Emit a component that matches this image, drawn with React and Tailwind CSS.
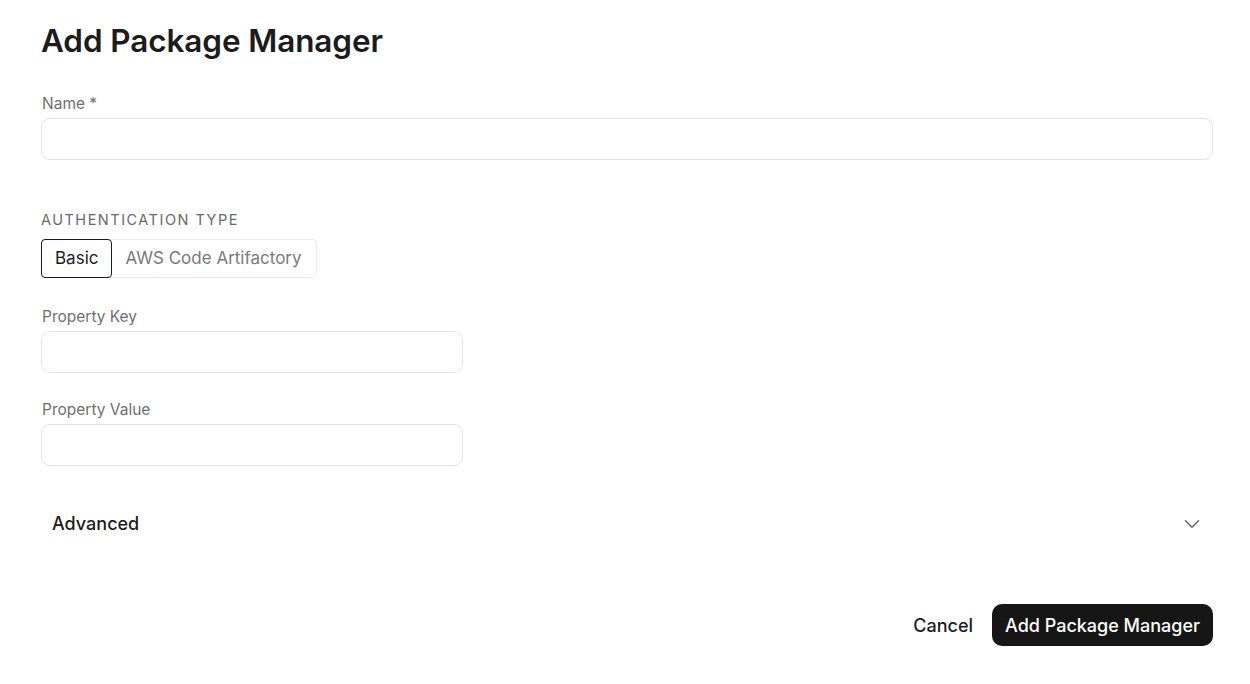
import React, { useState } from 'react'
import { ChevronDown } from 'lucide-react'

const Field = ({ label, className = '' }) => (
  <div className={className}>
    <label className="block pl-px text-[15.5px] leading-5 text-[#6f6f6f]">{label}</label>
    <input
      type="text"
      className="mt-[4px] block h-[42px] w-full rounded-[9px] border border-[#e4e4e4] bg-white px-3 text-[15px] outline-none"
    />
  </div>
)

const App = () => {
  const [auth, setAuth] = useState('basic')

  return (
    <div
      className="min-h-[684px] bg-white pl-[41px] pr-[37px] pt-[22px] text-[#1a1a1a]"
      style={{ fontFamily: 'Inter, "Noto Sans", sans-serif' }}
    >
      <h1 className="text-[31.5px] font-semibold leading-[38px] tracking-[-0.1px] text-[#1c1c1c]">
        Add Package Manager
      </h1>

      <Field label="Name *" className="mt-[34px]" />

      {/* Authentication type */}
      <div className="mt-[50px]">
        <div className="text-[14.5px] leading-5 tracking-[1.5px] text-[#6a6a6a]">AUTHENTICATION TYPE</div>
        <div className="mt-[9px] inline-flex h-[39px] rounded-[4px] border border-[#ebebeb]">
          <button
            onClick={() => setAuth('basic')}
            className={
              auth === 'basic'
                ? '-m-px rounded-[4px] border border-[#1c1c1c] px-[13px] text-[17px] text-[#1c1c1c]'
                : 'px-[13px] text-[17px] text-[#7a7a7a]'
            }
          >
            Basic
          </button>
          <button
            onClick={() => setAuth('aws')}
            className={
              auth === 'aws'
                ? '-m-px rounded-[4px] border border-[#1c1c1c] px-[14px] text-[17px] text-[#1c1c1c]'
                : 'px-[14px] text-[17px] text-[#7a7a7a]'
            }
          >
            AWS Code Artifactory
          </button>
        </div>
      </div>

      <Field label="Property Key" className="mt-[29px] w-[422px]" />
      <Field label="Property Value" className="mt-[27px] w-[422px]" />

      {/* Advanced accordion */}
      <button className="mt-[44px] flex h-[28px] w-full items-center justify-between pl-[11px] pr-[8px]">
        <span className="text-[18px] font-medium leading-6 text-[#1c1c1c]">Advanced</span>
        <ChevronDown className="h-[26px] w-[26px] text-[#6a6a6a]" strokeWidth={1.4} />
      </button>

      {/* Footer actions */}
      <div className="mt-[66px] flex items-center justify-end gap-[19px]">
        <button className="text-[18px] font-medium text-[#1c1c1c]">Cancel</button>
        <button className="h-[42px] rounded-[10px] bg-[#161616] px-[13px] text-[18px] font-medium text-white">
          Add Package Manager
        </button>
      </div>
    </div>
  )
}

export default App
